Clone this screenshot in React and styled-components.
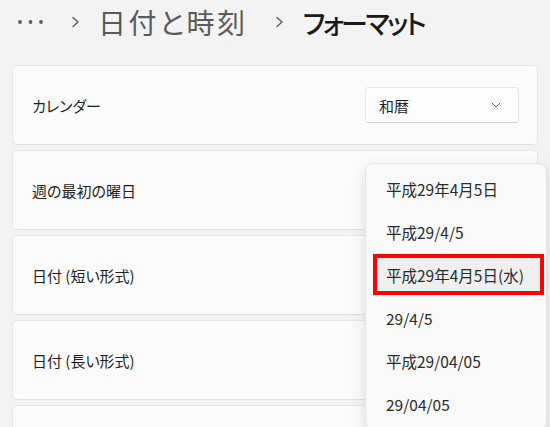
import React from 'react';
import styled, { createGlobalStyle } from 'styled-components';

const GlobalStyle = createGlobalStyle`
  html, body {
    margin: 0;
    padding: 0;
    background-color: #f3f3f3;
    font-family: "Noto Sans CJK JP", "Noto Sans", sans-serif;
    overflow: hidden;
  }
`;

const Page = styled.div`
  position: relative;
  width: 550px;
  height: 427px;
  overflow: hidden;
`;

// Breadcrumb header
const Header = styled.div`
  display: flex;
  align-items: center;
  height: 44px;
  padding-left: 17px;
  margin-bottom: 21px;
`;

const Crumb = styled.span`
  font-size: ${(p) => (p.$current ? '27px' : '28px')};
  line-height: 1;
  font-weight: ${(p) => (p.$current ? 500 : 400)};
  color: ${(p) => (p.$current ? '#1a1a1a' : '#5a5a5a')};
  font-feature-settings: "palt";
  letter-spacing: ${(p) => (p.$current ? '-2.5px' : '2.6px')};
  white-space: nowrap;
`;

const Sep = styled.span`
  display: flex;
  align-items: center;
  margin: ${(p) => p.$margin};
`;

const CardList = styled.div`
  display: flex;
  flex-direction: column;
  gap: 5px;
  padding: 0 12px;
`;

const Card = styled.div`
  box-sizing: border-box;
  height: 80px;
  display: flex;
  align-items: center;
  justify-content: space-between;
  padding: 0 18px 0 19px;
  background-color: #fbfbfb;
  border: 1px solid #e6e6e6;
  border-bottom-color: #dedede;
  border-radius: 5px;
`;

const Label = styled.span`
  font-size: 15px;
  color: #1e1e1e;
  font-feature-settings: "palt";
`;

const Combo = styled.div`
  box-sizing: border-box;
  width: 154px;
  height: 36px;
  display: flex;
  align-items: center;
  justify-content: space-between;
  padding: 0 17px 0 13px;
  background-color: #fdfdfd;
  border: 1px solid #e5e5e5;
  border-bottom-color: #d2d2d2;
  border-radius: 4px;
  font-size: 15px;
  color: #1e1e1e;
`;

// Open dropdown menu laid over the list
const Menu = styled.div`
  position: absolute;
  top: 163px;
  left: 365px;
  width: 182px;
  box-sizing: border-box;
  padding: 3px 4px;
  background-color: #f9f9f9;
  border: 1px solid #e3e3e3;
  border-radius: 7px;
  box-shadow: 0 6px 16px rgba(0, 0, 0, 0.12);
`;

const MenuItem = styled.div`
  box-sizing: border-box;
  height: ${(p) => (p.$selected ? '41px' : '43px')};
  margin: ${(p) => (p.$selected ? '1px -2px 1px 3px' : '0')};
  display: flex;
  align-items: center;
  padding-left: ${(p) => (p.$selected ? '9px' : '16px')};
  font-size: 15.5px;
  color: #2a2a2a;
  font-feature-settings: "palt";
  background-color: ${(p) => (p.$selected ? '#efefef' : 'transparent')};
  border: ${(p) => (p.$selected ? '4px solid #ff0000' : 'none')};
`;

const Dots = () => (
  <svg width="28" height="6" viewBox="0 0 28 6">
    <circle cx="3" cy="3" r="1.9" fill="#5c5c5c" />
    <circle cx="13.5" cy="3" r="1.9" fill="#5c5c5c" />
    <circle cx="24" cy="3" r="1.9" fill="#5c5c5c" />
  </svg>
);

const Chevron = () => (
  <svg width="9" height="12" viewBox="0 0 9 12">
    <path d="M2 1.5 L7 6 L2 10.5" fill="none" stroke="#5c5c5c" strokeWidth="1.4" strokeLinecap="round" strokeLinejoin="round" />
  </svg>
);

const ChevronDown = () => (
  <svg width="10" height="6" viewBox="0 0 10 6">
    <path d="M1 1 L5 5 L9 1" fill="none" stroke="#5a5a5a" strokeWidth="1" strokeLinecap="round" strokeLinejoin="round" />
  </svg>
);

// the fifth row sits below the fold, only its top edge shows
const rows = ['カレンダー', '週の最初の曜日', '日付 (短い形式)', '日付 (長い形式)', ''];

const formats = [
  '平成29年4月5日',
  '平成29/4/5',
  '平成29年4月5日(水)',
  '29/4/5',
  '平成29/04/05',
  '29/04/05',
];

export default function App() {
  return (
    <Page>
      <GlobalStyle />
      <Header>
        <Dots />
        <Sep $margin="0 18px 0 26px">
          <Chevron />
        </Sep>
        <Crumb>日付と時刻</Crumb>
        <Sep $margin="0 19px 0 27px">
          <Chevron />
        </Sep>
        <Crumb $current>フォーマット</Crumb>
      </Header>

      <CardList>
        {rows.map((label, i) => (
          <Card key={i}>
            <Label>{label}</Label>
            {i === 0 && (
              <Combo>
                <span>和暦</span>
                <ChevronDown />
              </Combo>
            )}
          </Card>
        ))}
      </CardList>

      <Menu>
        {formats.map((f, i) => (
          <MenuItem key={f} $selected={i === 2}>
            {f}
          </MenuItem>
        ))}
      </Menu>
    </Page>
  );
}
